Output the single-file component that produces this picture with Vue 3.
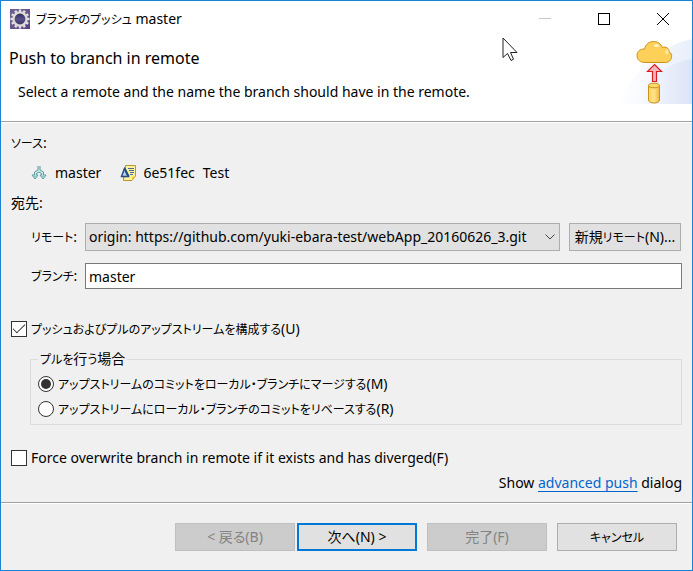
<script setup>
import { ref } from 'vue'

const remote = ref('origin')
const branch = ref('master')
const configure = ref(true)
const strategy = ref('merge')
const force = ref(false)
const teeth = Array.from({ length: 12 }, (_, i) => `rotate(${i * 30} 10 10)`)
</script>

<template>
  <main class="dialog">
    <header class="banner">
      <div class="titlebar">
        <svg class="app-icon" viewBox="0 0 20 20" aria-hidden="true">
          <defs>
            <linearGradient id="appBg" x1="0" y1="0" x2="1" y2="1">
              <stop offset="0" stop-color="#6b5e8c" />
              <stop offset="0.5" stop-color="#6a5590" />
              <stop offset="1" stop-color="#54407c" />
            </linearGradient>
            <linearGradient id="appCore" x1="0" y1="0" x2="0" y2="1">
              <stop offset="0" stop-color="#2b2646" />
              <stop offset="0.5" stop-color="#55508a" />
              <stop offset="1" stop-color="#3b3460" />
            </linearGradient>
          </defs>
          <rect width="20" height="20" fill="url(#appBg)" />
          <rect v-for="t in teeth" :key="t" x="8.8" y="0.4" width="2.4" height="4" fill="#e2dede" :transform="t" />
          <circle cx="10" cy="10" r="6.6" fill="url(#appCore)" stroke="#dedadb" stroke-width="2.400" />
        </svg>
        <h1 class="title"><span class="kana">ブランチのプッシュ</span> master</h1>
        <div class="window-buttons">
          <button class="window-button" type="button" aria-label="最小化" disabled>
            <svg viewBox="0 0 12 12"><path d="M0 5.5H12" stroke="#c8c8c8" /></svg>
          </button>
          <button class="window-button" type="button" aria-label="最大化">
            <svg viewBox="0 0 12 12"><rect x="0.5" y="0.5" width="11" height="11" fill="none" stroke="#000" /></svg>
          </button>
          <button class="window-button" type="button" aria-label="閉じる">
            <svg viewBox="0 0 12 12"><path d="M0 0L12 12M12 0L0 12" stroke="#000" /></svg>
          </button>
        </div>
      </div>
      <div class="intro">
        <div class="intro-text">
          <h2 class="heading">Push to branch in remote</h2>
          <p class="description">Select a remote and the name the branch should have in the remote.</p>
        </div>
        <svg class="push-art" viewBox="0 0 75 67" aria-hidden="true">
          <defs>
            <linearGradient id="swoosh" x1="0" y1="0" x2="1" y2="0">
              <stop offset="0" stop-color="#fff" />
              <stop offset="1" stop-color="#e9effa" />
            </linearGradient>
            <linearGradient id="swooshInner" x1="0" y1="0" x2="1" y2="0">
              <stop offset="0" stop-color="#fafbff" />
              <stop offset="1" stop-color="#dbe4f7" />
            </linearGradient>
            <linearGradient id="barrel" x1="0" y1="0" x2="1" y2="0">
              <stop offset="0" stop-color="#ffd45a" />
              <stop offset="0.5" stop-color="#ffe28a" />
              <stop offset="1" stop-color="#f0b93c" />
            </linearGradient>
          </defs>
          <path d="M0 67C10 47 36 10 75 2V67Z" fill="url(#swoosh)" />
          <path d="M18 67C30 41 50 26 75 22V67Z" fill="url(#swooshInner)" />
          <g transform="translate(3 1)">
            <path d="M25 24.500C20 24.500 17 21.500 17 17.500C17 13.500 20 10.800 24.500 11C25.500 6.500 29 3.500 33.500 3.500C38 3.500 41 6 42.300 9.500C46 8 49.500 10.500 49 14C51.500 15 52 17 51.500 19.500C51 22.500 48.500 24.500 45.500 24.500Z" fill="#fdd05a" stroke="#cc9416" />
            <ellipse cx="36.500" cy="7.500" rx="2.600" ry="1.600" fill="#fff2c0" />
            <ellipse cx="47" cy="14" rx="1.800" ry="2.200" fill="#ffe9a0" />
            <path d="M34.500 26.500L41.500 33.500H36.500V43.500H32.500V33.500H27.500Z" fill="#f6b6bd" stroke="#dc1c20" stroke-width="1.200" />
            <path d="M28.500 47.500V62C28.500 66 39.500 66 39.500 62V47.500Z" fill="url(#barrel)" stroke="#c8921c" />
            <ellipse cx="34" cy="47.500" rx="5.500" ry="2.300" fill="#ffdb6c" stroke="#c8921c" />
          </g>
        </svg>
      </div>
      <svg class="pointer" viewBox="0 0 16 25" aria-hidden="true">
        <path d="M1 1V20.500L5.500 16.500L9 23.500L11.500 22.200L8.500 15.500H15Z" fill="#fff" stroke="#20202c" />
      </svg>
    </header>

    <form class="content" @submit.prevent>
      <section>
        <h3 class="section-label"><span class="kana">ソース</span>:</h3>
        <div class="source">
          <svg class="branch-icon" viewBox="0 0 16 16" aria-hidden="true">
            <path d="M7 1V5L3.500 7V10H1L4 14L7 10H5.500V8.500L8 7L10.500 8.500V10H9L12 14L15 10H12.500V7L9 5V1" fill="#c9eaea" stroke="#5b9b9e" />
            <path d="M2 10.500H6L4 13ZM10 10.500H14L12 13Z" fill="#8cc8c8" />
          </svg>
          <span class="source-branch">master</span>
          <svg class="commit-icon" viewBox="0 0 16 16" aria-hidden="true">
            <path d="M5.500 0.500H15.500V11L12 15.500H3.500V12H5.500Z" fill="#fff0a0" stroke="#b8962c" />
            <path d="M12 15L12 11.500H15Z" fill="#f2cc38" />
            <path d="M8 3.500H14M9 5.500H14M10 7.500H14M10 9.500H13" stroke="#4c6b96" />
            <path d="M1.500 11.500L4.500 3.500L8.500 11.500Z" fill="#b9d3ec" stroke="#264f80" stroke-width="1.500" />
            <path d="M4.500 3.500L8.500 11.500" stroke="#264f80" stroke-width="2.200" />
          </svg>
          <span class="source-hash">6e51fec</span>
          <span>Test</span>
        </div>
      </section>
      <section>
        <h3 class="section-label">宛先:</h3>
        <div class="destination">
          <label for="remote"><span class="kana">リモート</span>:</label>
          <div class="remote-row">
            <div class="select-wrap">
              <select id="remote" v-model="remote">
                <option value="origin">origin: https://github.com/yuki-ebara-test/webApp_20160626_3.git</option>
              </select>
              <svg class="chevron" viewBox="0 0 10 6" aria-hidden="true"><path d="M0.500 0.500L5 5L9.500 0.500" fill="none" stroke="#444" /></svg>
            </div>
            <button class="button new-remote" type="button">新規<span class="kana">リモート</span>(N)...</button>
          </div>
          <label for="branch"><span class="kana">ブランチ</span>:</label>
          <input id="branch" v-model="branch" class="text-field" type="text">
        </div>
      </section>

      <label class="choice configure"><input v-model="configure" type="checkbox"><span><span class="kana">プッシュおよびプルのアップストリームを構成する</span>(U)</span></label>
      <fieldset class="group">
        <legend><span class="kana">プルを</span>行<span class="kana">う</span>場合</legend>
        <label class="choice"><input v-model="strategy" type="radio" name="strategy" value="merge"><span><span class="kana">アップストリームのコミットをローカル・ブランチにマージする</span>(M)</span></label>
        <label class="choice"><input v-model="strategy" type="radio" name="strategy" value="rebase"><span><span class="kana">アップストリームにローカル・ブランチのコミットをリベースする</span>(R)</span></label>
      </fieldset>
      <label class="choice force"><input v-model="force" type="checkbox"><span>Force overwrite branch in remote if it exists and has diverged(F)</span></label>
      <p class="advanced">Show <a href="#advanced">advanced push</a> dialog</p>
    </form>

    <footer class="actions">
      <div class="nav-actions">
        <button class="button" type="button" disabled>&lt; 戻る(B)</button>
        <button class="button primary" type="button">次へ(N) &gt;</button>
      </div>
      <button class="button" type="button" disabled>完了(F)</button>
      <button class="button" type="button"><span class="kana">キャンセル</span></button>
    </footer>
  </main>
</template>

<style>
body {
  margin: 0;
  background: #f0f0f0;
}
</style>

<style scoped>
* {
  box-sizing: border-box;
}

.dialog {
  display: flex;
  flex-direction: column;
  min-height: 100vh;
  border: 1px solid #1883d7;
  background: #f0f0f0;
  color: #000;
  font-family: "Noto Sans", "Noto Sans CJK JP", sans-serif;
  font-size: 14px;
  line-height: 20px;
  font-feature-settings: "palt";
}

h1, h2, h3, p {
  margin: 0;
  font-size: inherit;
  font-weight: 400;
}

button, input, select {
  font: inherit;
  font-feature-settings: inherit;
  color: inherit;
}

.kana {
  font-size: 12px;
  line-height: 1;
}

.banner {
  position: relative;
  background: #fff;
  border-bottom: 1px solid #a0a0a0;
}

.titlebar {
  display: flex;
  align-items: center;
  height: 36px;
  padding-left: 9px;
}

.app-icon {
  width: 20px;
  height: 20px;
}

.title {
  flex: 1;
  padding-left: 6px;
}

.window-buttons {
  display: flex;
}

.window-button {
  display: grid;
  place-items: center;
  width: 59px;
  height: 36px;
  padding: 0;
  border: 0;
  background: transparent;
}

.window-button svg {
  width: 12px;
  height: 12px;
}

.intro {
  display: flex;
  justify-content: space-between;
  height: 84px;
}

.intro-text {
  padding: 11px 8px;
}

.heading {
  font-size: 16px;
}

.description {
  padding: 14px 9px 0;
}

.push-art {
  flex: none;
  width: 75px;
  height: 67px;
}

.pointer {
  position: absolute;
  top: 36px;
  left: 501px;
  width: 16px;
  height: 25px;
}

.content {
  flex: 1;
  padding: 10px 10px 8px;
  border-top: 1px solid #fff;
}

.source {
  display: flex;
  align-items: center;
  height: 40px;
  padding-left: 20px;
}

.branch-icon, .commit-icon {
  width: 16px;
  height: 16px;
}

.source-branch {
  padding: 0 19px 0 8px;
}

.source-hash {
  padding: 0 8px 0 7px;
}

.destination {
  display: grid;
  grid-template-columns: 46px minmax(0, 1fr);
  column-gap: 8px;
  row-gap: 12px;
  align-items: center;
  padding: 10px 0 0 20px;
  white-space: nowrap;
}

.remote-row {
  display: flex;
  gap: 9px;
  padding-right: 1px;
}

.select-wrap {
  position: relative;
  flex: 1;
  min-width: 0;
}

select {
  appearance: none;
  display: block;
  width: 100%;
  height: 28px;
  padding: 0 26px 0 3px;
  border: 1px solid #adadad;
  border-radius: 0;
  background: #e1e1e1;
}

.chevron {
  position: absolute;
  top: 11px;
  right: 5px;
  width: 10px;
  height: 6px;
  pointer-events: none;
}

.button {
  width: 120px;
  height: 28px;
  padding: 0;
  border: 1px solid #adadad;
  background: #e1e1e1;
  white-space: nowrap;
}

.button:disabled {
  border-color: #bfbfbf;
  background: #ccc;
  color: #838383;
}

.button.primary {
  border: 2px solid #0078d7;
}

.new-remote {
  width: 112px;
}

.text-field {
  width: 100%;
  height: 26px;
  padding: 0 3px;
  border: 1px solid #7a7a7a;
  border-radius: 0;
  background: #fff;
}

.choice {
  display: flex;
  align-items: center;
  gap: 4px;
  height: 25px;
}

.choice input {
  appearance: none;
  display: grid;
  place-items: center;
  flex: none;
  width: 16px;
  height: 16px;
  margin: 0;
  border: 1px solid #333;
  background: #fff;
}

.choice input[type="checkbox"]:checked::before {
  content: "";
  width: 11px;
  height: 5px;
  margin-top: -4px;
  border: solid #333;
  border-width: 0 0 1px 1px;
  transform: rotate(-45deg);
}

.choice input[type="radio"] {
  border-radius: 50%;
}

.choice input[type="radio"]:checked::before {
  content: "";
  width: 10px;
  height: 10px;
  border-radius: 50%;
  background: #333;
}

.configure {
  margin-top: 27px;
}

.group {
  margin: 8px 0 0 19px;
  padding: 2px 7px 3px;
  border: 1px solid #dcdcdc;
}

.group legend {
  padding: 0 2px;
}

.force {
  margin-top: 20px;
}

.advanced {
  padding-top: 3px;
  text-align: right;
}

.advanced a {
  color: #0066cc;
  text-underline-offset: 3px;
}

.actions {
  display: flex;
  justify-content: flex-end;
  gap: 10px;
  padding: 20px 15px 19px;
  border-top: 1px solid #a0a0a0;
  box-shadow: inset 0 1px #fff;
}

.nav-actions {
  display: flex;
  gap: 2px;
}
</style>
